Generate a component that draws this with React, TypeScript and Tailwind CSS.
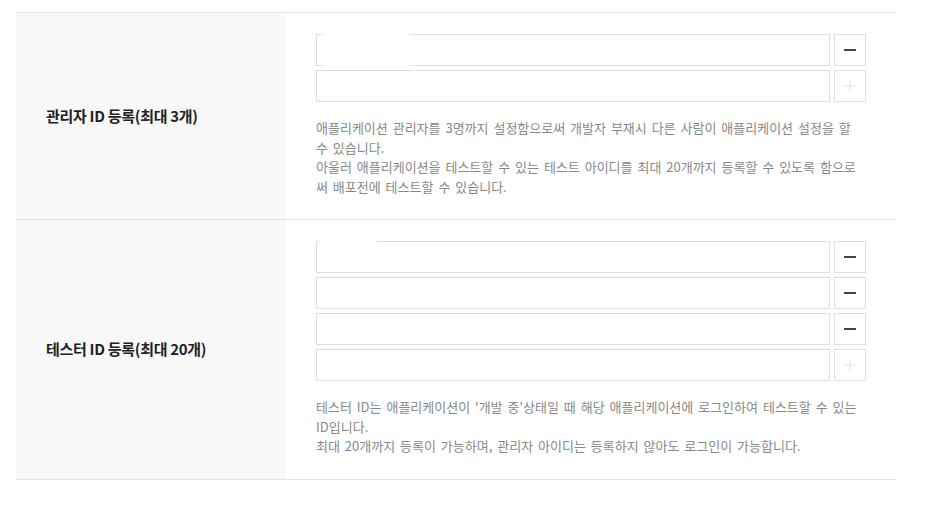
import React from 'react';

type Section = {
  title: string;
  inputs: number;
  lines: string[];
  masks: { left: number; top: number; width: number; height: number }[];
};

const sections: Section[] = [
  {
    title: '관리자 ID 등록(최대 3개)',
    inputs: 2,
    lines: [
      '애플리케이션 관리자를 3명까지 설정함으로써 개발자 부재시 다른 사람이 애플리케이션 설정을 할 수 있습니다.',
      '아울러 애플리케이션을 테스트할 수 있는 테스트 아이디를 최대 20개까지 등록할 수 있도록 함으로써 배포전에 테스트할 수 있습니다.',
    ],
    masks: [{ left: 6, top: -4, width: 88, height: 40 }],
  },
  {
    title: '테스터 ID 등록(최대 20개)',
    inputs: 4,
    lines: [
      "테스터 ID는 애플리케이션이 '개발 중'상태일 때 해당 애플리케이션에 로그인하여 테스트할 수 있는 ID입니다.",
      '최대 20개까지 등록이 가능하며, 관리자 아이디는 등록하지 않아도 로그인이 가능합니다.',
    ],
    masks: [{ left: 4, top: -4, width: 56, height: 9 }],
  },
];

const MinusButton = () => (
  <button className="w-8 h-8 shrink-0 border border-[#dedede] bg-white flex items-center justify-center">
    <span className="block w-3 h-[2px] bg-[#444]" />
  </button>
);

const PlusButton = () => (
  <button className="w-8 h-8 shrink-0 border border-[#e2e2e2] bg-white flex items-center justify-center">
    <svg width="12" height="12" viewBox="0 0 12 12">
      <path d="M6 0v12M0 6h12" stroke="#e3e3e3" strokeWidth="1" />
    </svg>
  </button>
);

const IdRow = ({ last, masked }: { last: boolean; masked?: Section['masks'] }) => (
  <div className="flex gap-1">
    <div className="relative flex-1 h-8">
      <input type="text" className="w-full h-8 border border-[#dedede] bg-white outline-none" />
      {masked?.map((m, i) => (
        <div
          key={i}
          className="absolute bg-white blur-[2px]"
          style={{ left: m.left, top: m.top, width: m.width, height: m.height }}
        />
      ))}
    </div>
    {last ? <PlusButton /> : <MinusButton />}
  </div>
);

export default function App() {
  return (
    <div className="bg-white min-h-screen pt-3 pl-4" style={{ fontFamily: '"Noto Sans CJK KR", "Noto Sans", sans-serif' }}>
      <div className="w-[880px] border-t border-[#e5e5e5]">
        {sections.map((s) => (
          <div key={s.title} className="flex border-b border-[#e5e5e5]">
            <div className="w-[270px] shrink-0 bg-[#f8f8f8] flex items-center pl-[30px]">
              <h3 className="text-[15px] font-bold text-[#222] tracking-[-0.3px]">{s.title}</h3>
            </div>
            <div className="flex-1 px-[30px] pt-[21px] pb-[23px]">
              <div className="flex flex-col gap-1">
                {Array.from({ length: s.inputs }).map((_, i) => (
                  <IdRow key={i} last={i === s.inputs - 1} masked={i === 0 ? s.masks : undefined} />
                ))}
              </div>
              <div className="mt-4 text-[13px] leading-[1.5] text-[#888] [word-spacing:2px]">
                {s.lines.map((l) => (
                  <p key={l}>{l}</p>
                ))}
              </div>
            </div>
          </div>
        ))}
      </div>
    </div>
  );
}
